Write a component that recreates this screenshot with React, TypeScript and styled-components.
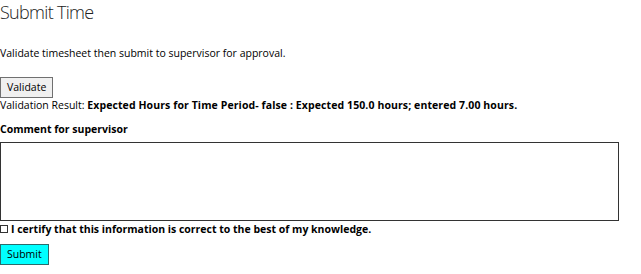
import { useState } from "react";
import styled, { createGlobalStyle } from "styled-components";

const GlobalStyle = createGlobalStyle`
  html, body {
    margin: 0;
    padding: 0;
    background: #ffffff;
  }
  body {
    font-family: "Open Sans", "Noto Sans", sans-serif;
    color: #000000;
  }
`;

const Page = styled.div`
  width: 641px;
  display: flex;
  flex-direction: column;
  align-items: flex-start;
`;

const Title = styled.h2`
  margin: 0;
  font-size: 18px;
  font-weight: 300;
  line-height: 24px;
  letter-spacing: -0.7px;
  color: #222222;
`;

const Intro = styled.p`
  margin: 22px 0 0;
  font-size: 10.5px;
  line-height: 14px;
`;

const FormButton = styled.button<{ $primary?: boolean }>`
  font-family: inherit;
  font-size: 10.5px;
  line-height: 13px;
  padding: 3px 6px;
  border: 1px solid ${(p) => (p.$primary ? "#2b6b6b" : "#707070")};
  background: ${(p) => (p.$primary ? "#00ffff" : "#f0f0f0")};
  color: #000000;
  border-radius: 0;
  margin: ${(p) => (p.$primary ? "8px 0 0" : "17px 0 0")};
`;

const ResultLine = styled.div`
  margin-top: 0;
  font-size: 10.5px;
  line-height: 14px;
  white-space: nowrap;

  strong {
    font-weight: 700;
    letter-spacing: 0.1px;
  }
`;

const FieldLabel = styled.label`
  margin-top: 10px;
  font-size: 10.5px;
  line-height: 14px;
  font-weight: 700;
`;

const Comment = styled.textarea`
  margin-top: 6px;
  width: 619px;
  height: 79px;
  box-sizing: border-box;
  border: 1px solid #333333;
  resize: none;
  font-family: inherit;
  font-size: 11px;
`;

const CertifyRow = styled.label`
  margin-top: 1px;
  display: flex;
  align-items: center;
  gap: 3px;
  font-size: 10.5px;
  line-height: 14px;
  font-weight: 700;
`;

const Box = styled.input`
  appearance: none;
  margin: 0;
  width: 8px;
  height: 8px;
  border: 1px solid #333333;
  background: #ffffff;

  &:checked {
    background: #333333;
  }
`;

export default function App() {
  const [certified, setCertified] = useState(false);

  return (
    <Page>
      <GlobalStyle />
      <Title>Submit Time</Title>
      <Intro>Validate timesheet then submit to supervisor for approval.</Intro>
      <FormButton type="button">Validate</FormButton>
      <ResultLine>
        Validation Result:{" "}
        <strong>
          Expected Hours for Time Period- false : Expected 150.0 hours; entered 7.00 hours.
        </strong>
      </ResultLine>
      <FieldLabel htmlFor="comment">Comment for supervisor</FieldLabel>
      <Comment id="comment" />
      <CertifyRow>
        <Box
          type="checkbox"
          checked={certified}
          onChange={(e) => setCertified(e.target.checked)}
        />
        I certify that this information is correct to the best of my knowledge.
      </CertifyRow>
      <FormButton type="button" $primary>
        Submit
      </FormButton>
    </Page>
  );
}
